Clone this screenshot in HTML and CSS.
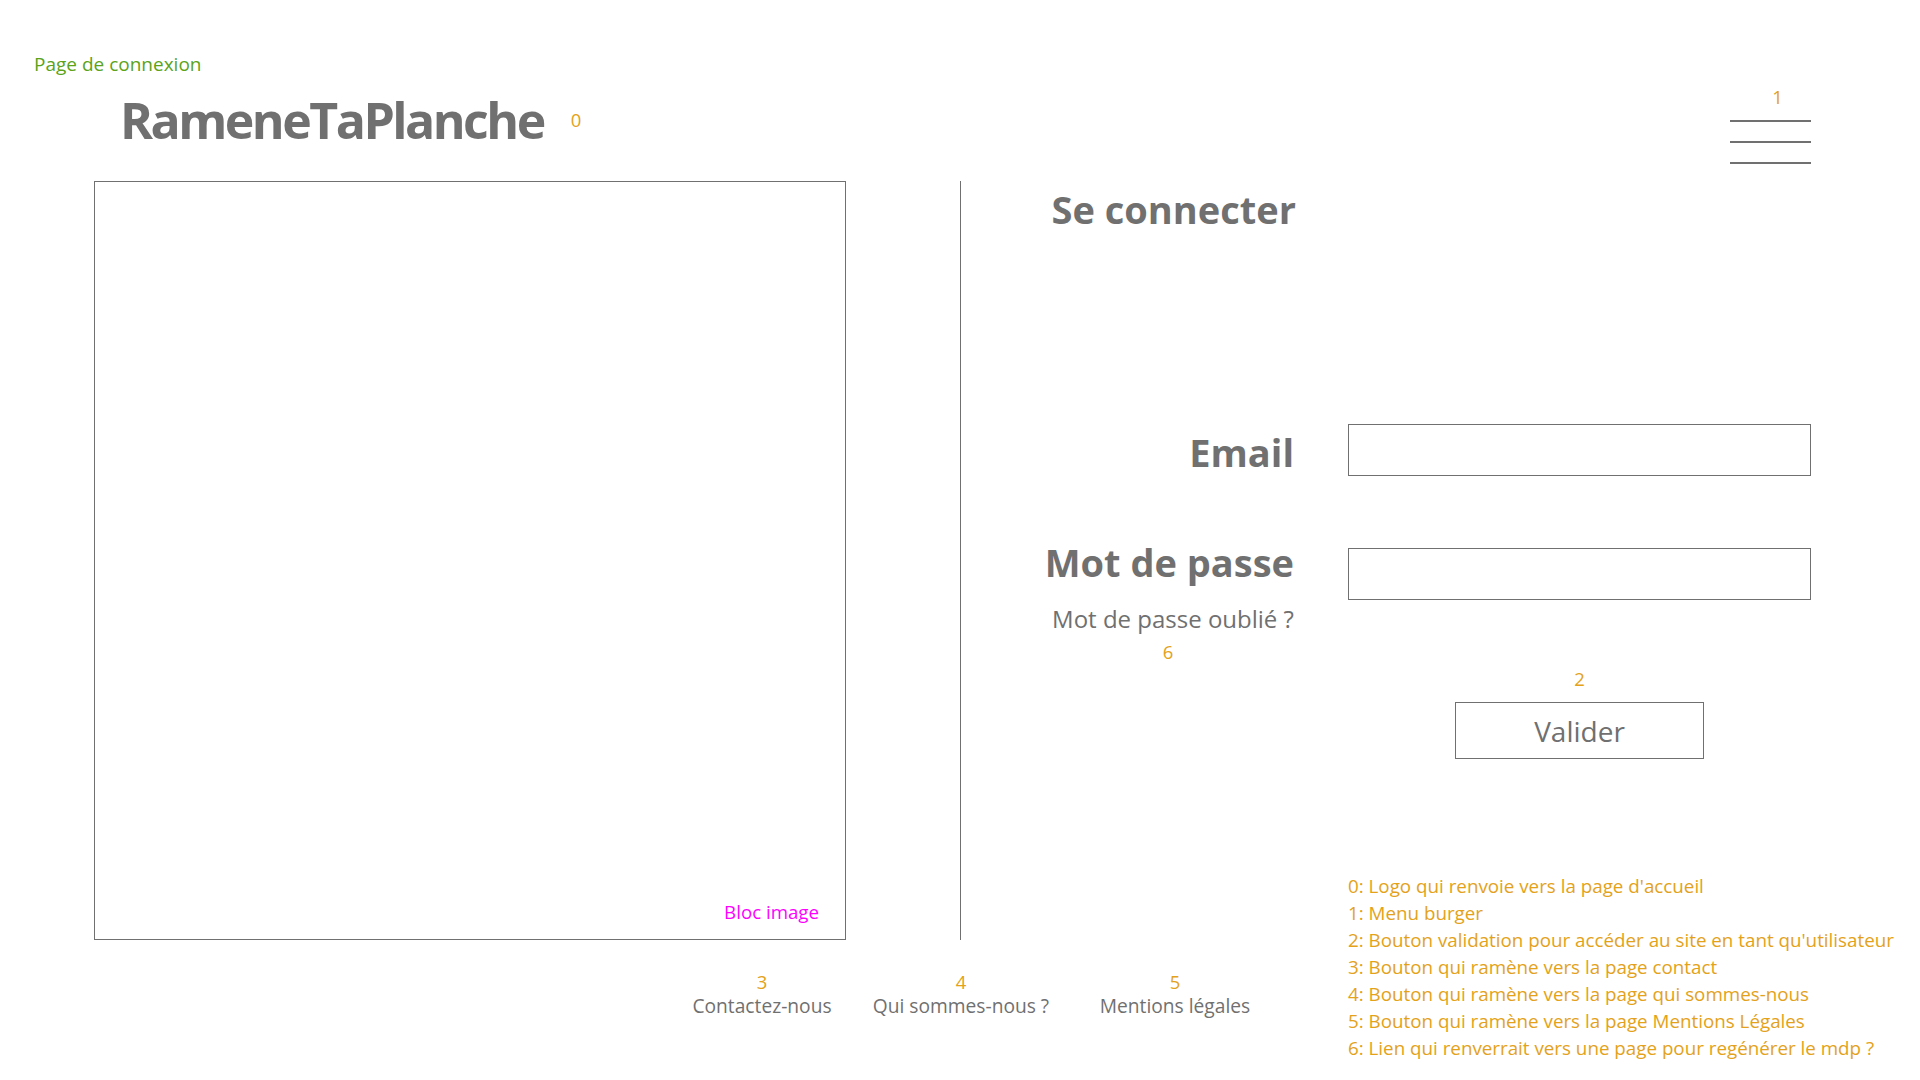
FILE: index.html
```html
<!DOCTYPE html>
<html lang="fr">
<head>
<meta charset="utf-8">
<title>Page de connexion - RameneTaPlanche</title>
<link rel="stylesheet" href="styles.css">
</head>
<body>
<div class="page">
  <div class="page-title">Page de connexion</div>
  <header class="topbar">
    <div class="brand">
      <a class="logo" href="#">RameneTaPlanche</a>
      <span class="num num-logo">0</span>
    </div>
    <div class="burger">
      <span class="num num-burger">1</span>
      <span class="bar bar-first"></span>
      <span class="bar"></span>
      <span class="bar"></span>
    </div>
  </header>

  <main class="content">
    <div class="image-block"><span class="image-label">Bloc image</span></div>
    <div class="divider"></div>
    <section class="login">
      <h1 class="login-title">Se connecter</h1>
      <div class="form-grid">
        <label class="field-label label-email" for="email">Email</label>
        <input class="field-input" id="email" type="email">
        <label class="field-label label-pass" for="pass">Mot de passe</label>
        <input class="field-input" id="pass" type="password">
        <div class="forgot">
          <a class="forgot-link" href="#">Mot de passe oublié ?</a>
          <span class="num num-forgot">6</span>
        </div>
        <div class="submit">
          <span class="num num-submit">2</span>
          <button class="btn-submit" type="button">Valider</button>
        </div>
      </div>
      <ul class="legend">
        <li>0: Logo qui renvoie vers la page d'accueil</li>
        <li>1: Menu burger</li>
        <li>2: Bouton validation pour accéder au site en tant qu'utilisateur</li>
        <li>3: Bouton qui ramène vers la page contact</li>
        <li>4: Bouton qui ramène vers la page qui sommes-nous</li>
        <li>5: Bouton qui ramène vers la page Mentions Légales</li>
        <li>6: Lien qui renverrait vers une page pour regénérer le mdp ?</li>
      </ul>
    </section>
  </main>

  <footer class="footer">
    <a class="foot-link foot-contact" href="#"><span class="num">3</span><span>Contactez-nous</span></a>
    <a class="foot-link foot-about" href="#"><span class="num">4</span><span>Qui sommes-nous ?</span></a>
    <a class="foot-link foot-legal" href="#"><span class="num">5</span><span>Mentions légales</span></a>
  </footer>
</div>
</body>
</html>
```
FILE: styles.css
```css
* { box-sizing: border-box; }
html, body {
  margin: 0;
  padding: 0;
  background: #ffffff;
}
body {
  font-family: "Open Sans", "Noto Sans", "Liberation Sans", sans-serif;
  color: #707070;
  width: 1920px;
  height: 1080px;
  overflow: hidden;
}
a { color: inherit; text-decoration: none; }

.num {
  color: #e3a21a;
  font-size: 18.5px;
  line-height: 24px;
}

.page-title {
  margin: 52px 0 0 34px;
  font-size: 19px;
  line-height: 24px;
  color: #5ba319;
}

.topbar {
  display: flex;
  justify-content: space-between;
  align-items: flex-start;
  margin-top: 9px;
  padding: 0 109px 0 120px;
  height: 78px;
}
.brand {
  display: flex;
  align-items: center;
  margin-top: 4px;
  height: 62px;
}
.logo {
  font-size: 50px;
  font-weight: 700;
  line-height: 62px;
  letter-spacing: -2.5px;
  color: #707070;
}
.num-logo { margin-left: 27px; }

.burger {
  display: flex;
  flex-direction: column;
  align-items: center;
  width: 81px;
}
.num-burger { padding-left: 14px; }
.bar {
  display: block;
  width: 81px;
  height: 1.5px;
  background: #707070;
  margin-top: 19.5px;
}
.bar.bar-first { margin-top: 11px; }

.content {
  display: flex;
  margin-top: 18px;
  height: 759px;
}
.image-block {
  margin-left: 94px;
  width: 752px;
  height: 759px;
  border: 1.5px solid #707070;
  display: flex;
  justify-content: flex-end;
  align-items: flex-end;
  padding: 0 26px 15px 0;
}
.image-label {
  color: #ff00ff;
  font-size: 18.7px;
  line-height: 24px;
}
.divider {
  margin-left: 114px;
  width: 1px;
  background: #707070;
}
.login {
  margin-left: 79px;
  width: 771px;
  display: flex;
  flex-direction: column;
}
.login-title {
  margin: 4px 0 0 0;
  width: 256px;
  text-align: right;
  font-size: 38px;
  line-height: 48px;
  font-weight: 700;
}
.form-grid {
  display: grid;
  grid-template-columns: 254px 463px;
  column-gap: 54px;
  margin-top: 191px;
}
.field-label {
  text-align: right;
  font-size: 38px;
  line-height: 48px;
  font-weight: 700;
}
.label-email {
  align-self: center;
  margin-top: 4px;
}
.label-pass {
  margin-top: 62px;
}
.field-input {
  height: 52px;
  border: 1.5px solid #707070;
  background: #fff;
  outline: none;
}
#pass { margin-top: 72px; }

.forgot {
  display: flex;
  flex-direction: column;
  align-items: center;
  padding-left: 12px;
  margin-top: 4px;
}
.forgot-link {
  font-size: 24px;
  line-height: 30px;
}
.num-forgot { margin-top: 6px; padding-right: 10px; }

.submit {
  display: flex;
  flex-direction: column;
  align-items: center;
  padding-top: 67px;
}
.btn-submit {
  margin-top: 11px;
  width: 249px;
  height: 57px;
  border: 1.5px solid #707070;
  background: #fff;
  color: #707070;
  font-family: inherit;
  font-size: 28px;
  padding: 0;
}

.legend {
  list-style: none;
  margin: 114px 0 0 308px;
  padding: 0;
  color: #e3a21a;
  font-size: 18.8px;
  line-height: 27px;
  white-space: nowrap;
}

.footer {
  display: flex;
  margin: 30px 0 0 662px;
}
.foot-link {
  display: flex;
  flex-direction: column;
  align-items: center;
  font-size: 19.2px;
  line-height: 23px;
}
.foot-contact { width: 200px; }
.foot-about { width: 198px; }
.foot-legal { width: 230px; }
```
